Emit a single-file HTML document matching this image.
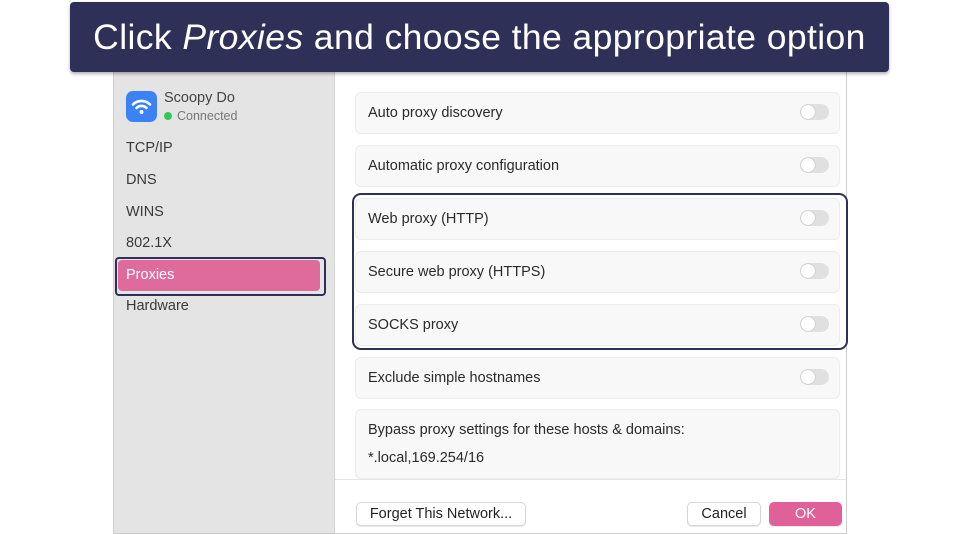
<!DOCTYPE html>
<html><head><meta charset="utf-8"><style>
body{margin:0;width:960px;height:533px;background:#fff;position:relative;overflow:hidden;font-family:"Liberation Sans",sans-serif;}
.win{position:absolute;left:113px;top:70px;width:732px;height:462px;border:1px solid #cfcfcf;background:#fff;}
.side{position:absolute;left:0;top:0;width:220px;height:462px;background:#e4e4e4;border-right:1px solid #d5d5d5;}
.banner{position:absolute;left:70px;top:2px;width:819px;height:70px;background:#2f3057;border-radius:4px;color:#fff;font-size:35.5px;line-height:70px;text-align:center;box-shadow:0 2px 3px rgba(0,0,0,.3);letter-spacing:0.4px}
.nav{position:absolute;left:12px;font-size:14.5px;color:#3a3a3a}
.row{position:absolute;left:241px;width:483px;height:40px;background:#f8f8f8;border:1px solid #ececec;border-radius:6px;font-size:14.5px;color:#2a2a2a;}
.row span{position:absolute;left:12px;top:12px}
.tg{position:absolute;right:10px;top:11px;width:29px;height:16px;border-radius:9px;background:#e0e0e0}
.tg:after{content:"";position:absolute;left:1px;top:1px;width:14px;height:14px;border-radius:50%;background:#fff;box-shadow:0 0 1px rgba(0,0,0,.4)}
.btn{position:absolute;top:431px;height:22px;border:1px solid #d6d6d6;border-radius:5px;background:#fff;font-size:14.5px;line-height:22px;text-align:center;color:#222;box-shadow:0 1px 1px rgba(0,0,0,.1)}
</style></head><body>
<div class="win">
 <div class="side">
  <div style="position:absolute;left:12px;top:20px;width:31px;height:31px;border-radius:7px;background:#3b82f6">
   <svg width="31" height="31" viewBox="0 0 31 31"><g fill="none" stroke="#fff" stroke-width="2.6" stroke-linecap="round"><path d="M7 13.5a12 12 0 0 1 17 0"/><path d="M10.5 17a7 7 0 0 1 10 0"/></g><circle cx="15.5" cy="21" r="2" fill="#fff"/></svg>
  </div>
  <div style="position:absolute;left:50px;top:19px;font-size:14.5px;color:#444">Scoopy Do</div>
  <div style="position:absolute;left:50px;top:38px;font-size:12.5px;color:#777"><span style="display:inline-block;width:8px;height:8px;border-radius:50%;background:#34c759;margin-right:5px"></span>Connected</div>
  <div class="nav" style="top:69px">TCP/IP</div>
  <div class="nav" style="top:101px">DNS</div>
  <div class="nav" style="top:133px">WINS</div>
  <div class="nav" style="top:164px">802.1X</div>
  <div style="position:absolute;left:1px;top:186px;width:207px;height:35px;border:2px solid #2f3057;border-radius:4px"></div>
  <div style="position:absolute;left:4px;top:189px;width:202px;height:31px;background:#df6b9c;border-radius:4px;color:#fff;font-size:14.5px;line-height:31px;padding-left:8px;box-sizing:border-box">Proxies</div>
  <div class="nav" style="top:227px">Hardware</div>
 </div>
 <div class="row" style="top:21px"><span>Auto proxy discovery</span><div class="tg"></div></div>
 <div class="row" style="top:74px"><span>Automatic proxy configuration</span><div class="tg"></div></div>
 <div class="row" style="top:127px"><span>Web proxy (HTTP)</span><div class="tg"></div></div>
 <div class="row" style="top:180px"><span>Secure web proxy (HTTPS)</span><div class="tg"></div></div>
 <div class="row" style="top:233px"><span>SOCKS proxy</span><div class="tg"></div></div>
 <div style="position:absolute;left:238px;top:122px;width:492px;height:153px;border:2px solid #2f3057;border-radius:9px"></div>
 <div class="row" style="top:286px"><span>Exclude simple hostnames</span><div class="tg"></div></div>
 <div class="row" style="top:338px;height:68px"><span>Bypass proxy settings for these hosts &amp; domains:</span><span style="top:40px">*.local,169.254/16</span></div>
 <div style="position:absolute;left:221px;top:408px;width:511px;height:1px;background:#e5e5e5"></div>
 <div class="btn" style="left:242px;width:168px">Forget This Network...</div>
 <div class="btn" style="left:573px;width:72px">Cancel</div>
 <div class="btn" style="left:655px;width:71px;background:#e0609a;border-color:#e0609a;color:#fff">OK</div>
</div>
<div class="banner">Click <i>Proxies</i> and choose the appropriate option</div>
</body></html>
